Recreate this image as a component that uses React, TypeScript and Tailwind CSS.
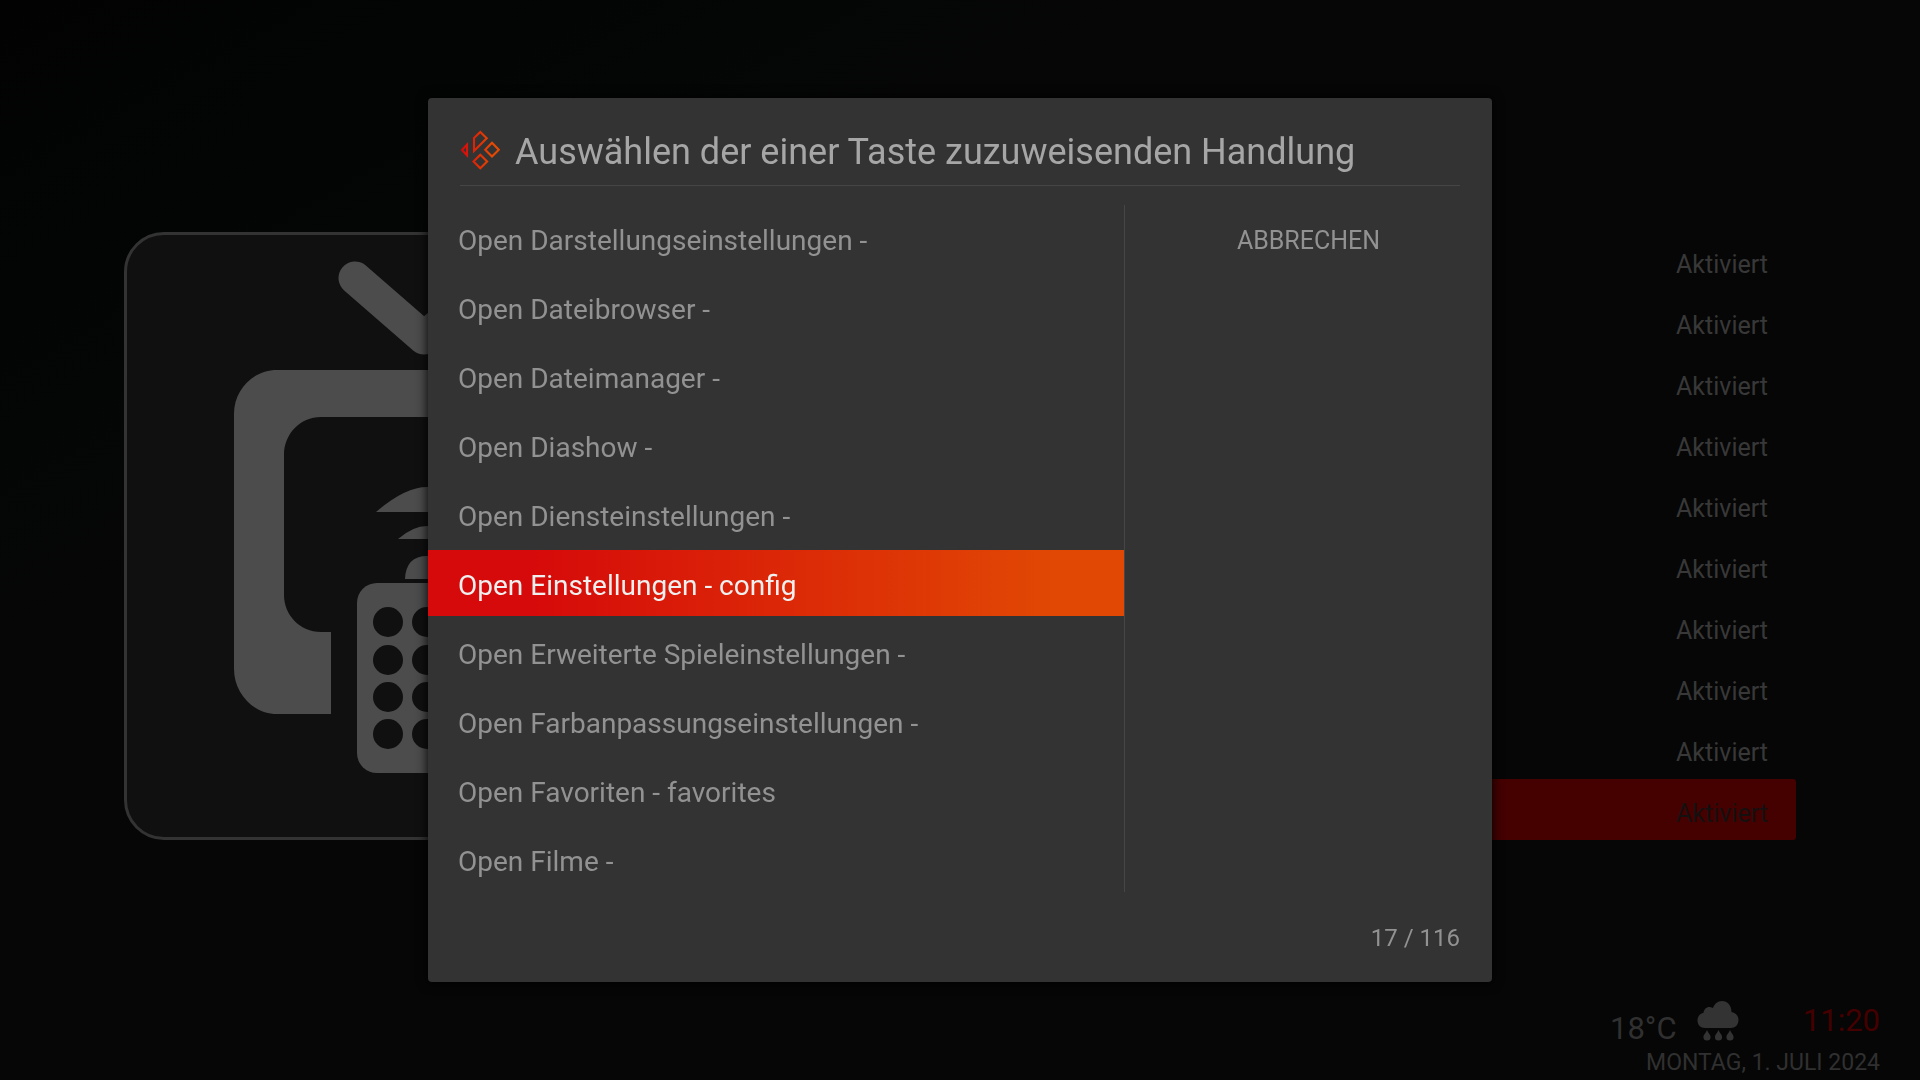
import { useState } from 'react';

// represents one action that can be assigned to the pressed key
interface ActionOption {
    id: string;
    label: string;
}

const ACTIONS: ActionOption[] = [
    { id: 'appearance', label: 'Open Darstellungseinstellungen -' },
    { id: 'filebrowser', label: 'Open Dateibrowser -' },
    { id: 'filemanager', label: 'Open Dateimanager -' },
    { id: 'slideshow', label: 'Open Diashow -' },
    { id: 'services', label: 'Open Diensteinstellungen -' },
    { id: 'settings', label: 'Open Einstellungen - config' },
    { id: 'games', label: 'Open Erweiterte Spieleinstellungen -' },
    { id: 'calibration', label: 'Open Farbanpassungseinstellungen -' },
    { id: 'favourites', label: 'Open Favoriten - favorites' },
    { id: 'movies', label: 'Open Filme -' },
];

const ADDON_STATES = Array.from({ length: 10 }, () => 'Aktiviert');

function KodiLogo() {
    return (
        <svg viewBox="0 0 40 40" className="size-10 shrink-0" fill="none" aria-hidden="true">
            <defs>
                <linearGradient id="kodi" gradientUnits="userSpaceOnUse" x1="2" y1="0" x2="32" y2="0">
                    <stop offset="0" stopColor="#d60a0a" />
                    <stop offset="1" stopColor="#e64a02" />
                </linearGradient>
            </defs>
            <g stroke="url(#kodi)" strokeWidth="2.1">
                <path d="M2 20 7 14.7V25.3Z" />
                <path d="M14 8 20.3 1.9 26.7 8.2 14 20.9Z" />
                <path d="M32 12.8 38.8 19.7 32 26.6 25.2 19.7Z" />
                <path d="M20.3 24.8 27.1 31.5 20.3 38.3 13.5 31.5Z" />
            </g>
        </svg>
    );
}

// tv set with a remote control in front of it
function TvRemoteIcon() {
    return (
        <svg viewBox="0 0 602 602" className="size-full" aria-hidden="true">
            <path
                d="M228 43 297 103 367 43"
                fill="none"
                stroke="#4c4c4c"
                strokeWidth="33"
                strokeLinecap="round"
                strokeLinejoin="round"
            />
            <g fill="#4c4c4c">
                <path d="M204 479H150C126 479 107 458 107 434V179C107 155 126 135 150 135H445C469 135 488 155 488 179V434C488 458 469 479 445 479H396V397H402C422 397 438 380 438 360V220C438 199 422 182 402 182H194C173 182 157 199 157 220V360C157 380 173 397 194 397H204Z" />
                <path d="M249 277Q278 252 300 252 322 252 351 277Z" />
                <path d="M271 304Q286 291 300 291 314 291 329 304Z" />
                <path d="M278 344Q279 321 300 321 321 321 322 344Z" />
                <rect x="230" y="348" width="140" height="190" rx="20" />
            </g>
            <g fill="#101010">
                {[387, 425, 462, 499].map((y) =>
                    [261, 300, 339].map((x) => <circle key={`${x}-${y}`} cx={x} cy={y} r="15" />)
                )}
            </g>
        </svg>
    );
}

function RainIcon() {
    return (
        <svg viewBox="0 0 42 40" className="h-10 w-[42px]" fill="#333333" aria-hidden="true">
            <path d="M8 27C3.500 27 .5 24 .5 19.500 .5 15.500 3 12.500 6.500 11.800 7 8 10 5.500 13.500 6.200 14.500 6.200 15.200 6.600 16 7 17.500 3 20.500 0 25 0 30.500 0 34.500 4.500 34.500 11 38.500 11.500 41.500 14.500 41.500 19 41.500 24 38 27 34 27Z" />
            {[10, 21.500, 33].map((x) => (
                <path
                    key={x}
                    transform={`translate(${x} 29)`}
                    d="M0 0C1 3 3.600 4.500 3.600 7A3.600 3.600 0 0 1-3.600 7C-3.600 4.500-1 3 0 0Z"
                />
            ))}
        </svg>
    );
}

export default function App() {
    const [selected, setSelected] = useState('settings');
    const [open, setOpen] = useState(true);

    return (
        <div className="flex min-h-screen flex-col bg-linear-to-br from-[#020202] via-[#030505] via-15% to-[#060606] to-30% font-[Roboto,sans-serif] text-[#383838]">
            {/* add-on overview behind the dialog */}
            <main className="flex flex-1 items-start justify-between gap-10 px-[124px] pt-[230px]">
                <div className="mt-[2px] aspect-square w-[608px] overflow-hidden rounded-[40px] border-[3px] border-[#333333] bg-[#101010]">
                    <TvRemoteIcon />
                </div>
                <ul className="flex-1 text-[25px]">
                    {ADDON_STATES.map((state, i) => (
                        <li
                            key={i}
                            className={`flex h-[61px] items-center justify-end rounded-[3px] px-7 pt-2 ${
                                i === ADDON_STATES.length - 1 ? 'bg-[#450000] text-[#151010]' : ''
                            }`}
                        >
                            {state}
                        </li>
                    ))}
                </ul>
            </main>

            <footer className="flex flex-col items-end px-10 pb-[3px] text-[#303030]">
                <div className="flex h-12 w-[270px]">
                    <span className="pt-2.5 text-[31px] leading-9">18°C</span>
                    <span className="ml-5">
                        <RainIcon />
                    </span>
                    <time className="ml-auto pt-0.5 text-[31px] leading-9 text-[#440000]">11:20</time>
                </div>
                <span className="text-[23px] leading-7">MONTAG, 1. JULI 2024</span>
            </footer>

            {/* key mapping dialog */}
            {open && (
                <div className="fixed inset-0 flex items-center justify-center">
                    <section
                        role="dialog"
                        aria-labelledby="dialog-title"
                        className="w-full max-w-[1064px] rounded bg-[#333333] text-[28px] text-[#929292] shadow-[0_0_12px_#000000]"
                    >
                        <header className="mx-8 flex h-[88px] items-center gap-[15px] border-b border-[#464646] pt-4">
                            <KodiLogo />
                            <h1 id="dialog-title" className="pt-1 text-[36px] text-[#a6a6a6]">
                                Auswählen der einer Taste zuzuweisenden Handlung
                            </h1>
                        </header>

                        <div className="flex pt-[19px]">
                            <ul className="flex flex-1 flex-col gap-[3px]">
                                {ACTIONS.map((action) => (
                                    <li key={action.id}>
                                        <button
                                            type="button"
                                            onClick={() => setSelected(action.id)}
                                            className={`flex h-[66px] w-full items-center px-[30px] pt-1.5 text-left ${
                                                action.id === selected
                                                    ? 'bg-linear-to-r/srgb from-[#d60a0a] from-15% to-[#e14804] to-90% text-[#f0f0f0]'
                                                    : ''
                                            }`}
                                        >
                                            {action.label}
                                        </button>
                                    </li>
                                ))}
                            </ul>
                            <div className="w-[368px] border-l border-[#464646]">
                                <button
                                    type="button"
                                    onClick={() => setOpen(false)}
                                    className="flex h-[66px] w-full items-center justify-center pt-1.5 text-[25px]"
                                >
                                    ABBRECHEN
                                </button>
                            </div>
                        </div>

                        <p className="px-8 pt-[30px] pb-7 text-right text-2xl">17 / 116</p>
                    </section>
                </div>
            )}
        </div>
    );
}
